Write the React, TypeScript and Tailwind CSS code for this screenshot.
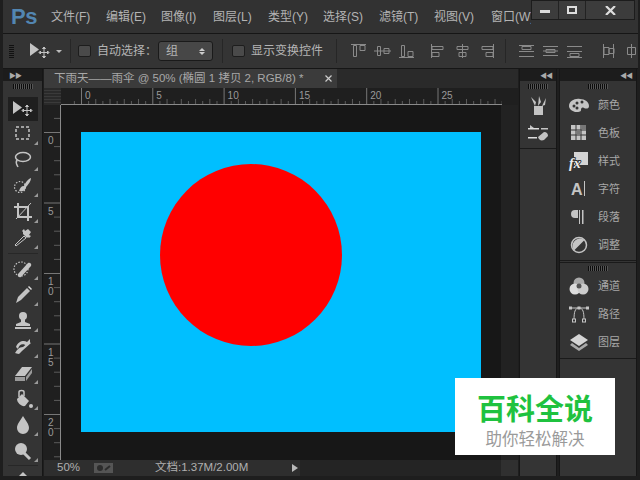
import React from 'react';

const c = '#c4c4c4';

const Grip = () => (
  <div className="h-[5px] w-[20px] bg-[repeating-linear-gradient(90deg,#0c0c0c_0,#0c0c0c_1px,#555_1px,#555_2px)]" />
);

const MoveIcon = () => (
  <svg width="24" height="18" viewBox="0 0 24 18">
    <path d="M2 1v13l9-6.5z" fill={c} />
    <path d="M16 6v9M12 10.5h8M16 5l-1.5 1.5h3zM16 16l-1.5-1.5h3zM11 10.5l1.5-1.5v3zM21 10.5L19.5 9v3z" stroke={c} fill={c} strokeWidth="1" />
  </svg>
);

const tools: React.ReactNode[] = [
  <rect key="m" x="3" y="3" width="13" height="12" fill="none" stroke={c} strokeWidth="1.5" strokeDasharray="3 2" />,
  <g key="l" fill="none" stroke={c} strokeWidth="1.5"><ellipse cx="10" cy="7" rx="7.5" ry="4.5" /><path d="M4 10c-2 3 0 5 1 7" /></g>,
  <g key="q"><circle cx="7" cy="11" r="5.5" fill="none" stroke={c} strokeWidth="1.2" strokeDasharray="1.5 1.5" /><path d="M18 2c-3 1-6 5-7 8-3 0-4 2-5 5 4 1 7-1 7-4 2-2 5-6 5-9z" fill={c} /></g>,
  <g key="c" fill="none" stroke={c} strokeWidth="2"><path d="M5 1v14h14M1 5h14v14" /><path d="M18 1L3 17" strokeWidth="1" /></g>,
  <g key="e"><path d="M3 18l-1-1L11 8l2 2z" fill="none" stroke={c} /><path d="M10 6l4 4 1-1 1 1 2-2-2-1 2-3-3-3-3 2-1-2-2 2 1 1z" fill={c} /></g>,
  <g key="h"><circle cx="8" cy="10" r="7" fill="none" stroke={c} strokeWidth="1.2" strokeDasharray="1.5 1.5" /><path d="M5 15L15 4c2-1 4 1 3 3L8 18c-2 1-4-1-3-3z" fill={c} /></g>,
  <g key="b"><path d="M3 18l2-6L14 3l3 3-9 9z" fill={c} /><path d="M15 2l1-1 3 3-1 1z" fill="#e0e0e0" /></g>,
  <g key="s" fill={c}><circle cx="10" cy="5" r="4" /><path d="M8 8h4v3l5 2v2H3v-2l5-2zM2 16h16v2H2z" /></g>,
  <g key="hb" fill={c}><path d="M3 10c2-6 8-7 11-5l3-3v4l-3 3C10 6 6 7 5 12z" /><path d="M18 6l-9 8-3 3c-2 0-3-1-4-1 2-3 4-6 8-6l6-5z" /></g>,
  <g key="er" fill={c}><path d="M2 13l7-9h10l-7 9z" /><path d="M2 14h10v4H2zM13 14l6-8v4l-6 8z" fill="#9a9a9a" /></g>,
  <g key="f" fill={c}><path d="M4 10l5-5 7 7-4 5c-3 1-8-3-8-7z" /><path d="M6 8V3c0-2 5-2 5 0v4" fill="none" stroke={c} strokeWidth="1.5" /><circle cx="18" cy="17" r="2" /></g>,
  <path key="d" d="M10 1c3 5 6 8 6 12a6 6 0 0 1-12 0c0-4 3-7 6-12z" fill={c} />,
  <g key="z"><circle cx="8" cy="8" r="6" fill={c} /><path d="M11 12l6 6" stroke={c} strokeWidth="3" /></g>,
];

const ToolButton = ({ children }: { children: React.ReactNode }) => (
  <div className="relative flex h-[26px] w-[30px] items-center justify-center">
    <svg width="20" height="20" viewBox="0 0 20 20">{children}</svg>
    <span className="absolute bottom-[2px] right-0 h-0 w-0 border-b-[4px] border-l-[4px] border-b-[#999] border-l-transparent" />
  </div>
);

const AlignIcon = ({ d }: { d: string }) => (
  <svg className="shrink-0" width="17" height="16" viewBox="0 0 17 16">
    <path d={d} fill="none" stroke="#8a8a8a" strokeWidth="1" />
  </svg>
);

const alignIcons = [
  'M1 1.5h15M3.5 2.5h3v11h-3zM10 2.5h5v5h-5z',
  'M0 8h17M3.5 3.5h3v9h-3zM10 5.5h5v5h-5z',
  'M1 14.5h15M3.5 2.5h3v11h-3zM10 8.5h5v5h-5z',
];
const alignIcons2 = [
  'M1.5 1v14M2 3.5h11v3H2zM2 9.5h7v4H2z',
  'M8.5 1v14M3 3.5h11v3H3zM5 9.5h7v4H5z',
  'M15.5 1v14M4 3.5h11v3H4zM8 9.5h7v4H8z',
];
const distIcons = [
  'M1 2.5h15M1 13.5h15M4 3.5h9v3H4zM1 8.5h15',
  'M1 3.5h15M1 12.5h15M4 6.5h9v3H4zM1 8h15',
  'M1 3.5h15M1 14.5h15M4 10.5h9v3H4zM1 8.5h15',
];
const spreadIcons = [
  'M3.5 1v14M13.5 1v14M4 4.5h5v7H4zM9 5.5h5v5H9z',
  'M8.5 1v14M4.5 4.5h8v7h-8z',
];

const menus = [
  { label: '文件(F)', w: 'w-[55px]' },
  { label: '编辑(E)', w: 'w-[55px]' },
  { label: '图像(I)', w: 'w-[52px]' },
  { label: '图层(L)', w: 'w-[55px]' },
  { label: '类型(Y)', w: 'w-[55px]' },
  { label: '选择(S)', w: 'w-[56px]' },
  { label: '滤镜(T)', w: 'w-[55px]' },
  { label: '视图(V)', w: 'w-[57px]' },
  { label: '窗口(W)', w: 'w-[55px]' },
];

const PanelItem = ({ icon, label }: { icon: React.ReactNode; label: string }) => (
  <div className="flex h-[28px] items-center">
    <div className="flex w-[38px] justify-center">{icon}</div>
    <span className="text-[11px] text-[#a8a8a8]">{label}</span>
  </div>
);

const DockHeader = () => (
  <div className="flex h-[12px] items-center justify-end bg-[#1c1c1c] pr-[4px]">
    <span className="text-[7px] leading-none tracking-[-1px] text-[#aaa]">◀◀</span>
  </div>
);

const Ico = ({ children }: { children: React.ReactNode }) => (
  <svg width="22" height="20" viewBox="0 0 22 20">{children}</svg>
);

const TopRuler = () => {
  const ticks: React.ReactNode[] = [];
  for (let i = -1; i <= 59; i++) {
    const x = 20.5 + i * 7.13;
    const major = i % 10 === 0;
    ticks.push(<line key={i} x1={x} x2={x} y1={major ? 0 : i % 2 === 0 ? 11 : 13} y2={16} stroke={major ? '#777' : '#5c5c5c'} />);
  }
  return (
    <svg width="441" height="17" className="block">
      {ticks}
      <line x1="0" x2="441" y1="16.5" y2="16.5" stroke="#8a8a8a" />
      {[0, 5, 10, 15, 20, 25].map((n, i) => (
        <text key={n} x={24 + i * 71.3} y="11" fontSize="10" fill="#9a9a9a" fontFamily="Liberation Sans, sans-serif">{n}</text>
      ))}
    </svg>
  );
};

const LeftRuler = () => {
  const ticks: React.ReactNode[] = [];
  for (let i = -2; i <= 24; i++) {
    const y = 27.5 + i * 14.1;
    const major = i % 5 === 0;
    ticks.push(<line key={i} x1={major ? 0 : 10} x2={16} y1={y} y2={y} stroke={major ? '#777' : '#5c5c5c'} />);
  }
  const labels = [['0'], ['5'], ['1', '0'], ['1', '5'], ['2', '0']];
  return (
    <svg width="17" height="355" className="block shrink-0">
      {ticks}
      <line x1="16.5" x2="16.5" y1="0" y2="355" stroke="#8a8a8a" />
      {labels.map((l, i) =>
        l.map((t, j) => (
          <text key={i + '-' + j} x="4" y={39 + i * 70.6 + j * 10} fontSize="10" fill="#9a9a9a" fontFamily="Liberation Sans, sans-serif">{t}</text>
        ))
      )}
    </svg>
  );
};

export default function App() {
  return (
    <div className="relative flex h-[480px] w-[640px] flex-col overflow-hidden bg-[#1e1e1e] pl-[3px] pr-[2px] pb-[4px] font-['Liberation_Sans','Noto_Sans_CJK_SC',sans-serif] text-[#b4b4b4]">
      {/* menu bar */}
      <div className="flex h-[34px] shrink-0 border-b border-[#161616] bg-[#323232]">
        <div className="flex min-w-0 flex-1 items-center overflow-hidden pl-[8px]">
          <span className="w-[40px] shrink-0 text-[22px] font-bold leading-none tracking-[-0.5px] text-[#5286b2]">Ps</span>
          <div className="flex shrink-0 whitespace-nowrap pt-[1px] text-[12px]">
            {menus.map((m) => (
              <span key={m.label} className={m.w}>{m.label}</span>
            ))}
          </div>
        </div>
        <div className="mr-[3px] flex h-[20px] w-[104px] shrink-0 border border-[#1c1c1c] bg-[#3c3c3c]">
          <div className="flex w-[27px] items-center justify-center border-r border-[#222]">
            <span className="mt-[3px] h-[3px] w-[10px] bg-[#ddd]" />
          </div>
          <div className="flex w-[27px] items-center justify-center border-r border-[#222]">
            <span className="h-[8px] w-[10px] border-2 border-[#ddd]" />
          </div>
          <div className="flex flex-1 items-center justify-center">
            <svg width="11" height="9" viewBox="0 0 11 9"><path d="M1 0l9 9M10 0L1 9" stroke="#ddd" strokeWidth="2.2" /></svg>
          </div>
        </div>
      </div>

      {/* options bar */}
      <div className="flex h-[35px] shrink-0 items-center overflow-hidden whitespace-nowrap border-b border-[#161616] bg-[#343434] pl-[6px] text-[12px] [&>*]:shrink-0">
        <div className="flex w-[6px] flex-col gap-[1px]">
          {Array.from({ length: 7 }).map((_, i) => <span key={i} className="h-[1px] w-[5px] bg-[#111]" />)}
        </div>
        <div className="ml-[13px]"><MoveIcon /></div>
        <span className="ml-[4px] h-0 w-0 border-x-[3px] border-t-[3px] border-x-transparent border-t-[#bbb]" />
        <span className="ml-[8px] h-[24px] w-px bg-[#262626]" />
        <span className="ml-[7px] h-[12px] w-[13px] rounded-[2px] border border-[#1d1d1d] bg-[#4a4a4a]" />
        <span className="ml-[6px]">自动选择：</span>
        <div className="ml-[1px] flex h-[20px] w-[55px] items-center justify-between rounded-[3px] border border-[#1a1a1a] bg-[#474747] px-[7px]">
          <span>组</span>
          <span className="flex flex-col gap-[1px]">
            <span className="h-0 w-0 border-x-[3px] border-b-[3px] border-x-transparent border-b-[#ccc]" />
            <span className="h-0 w-0 border-x-[3px] border-t-[3px] border-x-transparent border-t-[#ccc]" />
          </span>
        </div>
        <span className="ml-[9px] h-[24px] w-px bg-[#262626]" />
        <span className="ml-[9px] h-[12px] w-[13px] rounded-[2px] border border-[#1d1d1d] bg-[#4a4a4a]" />
        <span className="ml-[6px]">显示变换控件</span>
        <span className="ml-[13px] h-[24px] w-px bg-[#262626]" />
        <div className="ml-[13px] flex gap-[7px]">{alignIcons.map((d) => <AlignIcon key={d} d={d} />)}</div>
        <div className="ml-[15px] flex gap-[7px]">{alignIcons2.map((d) => <AlignIcon key={d} d={d} />)}</div>
        <span className="ml-[10px] h-[24px] w-px bg-[#262626]" />
        <div className="ml-[12px] flex gap-[7px]">{distIcons.map((d) => <AlignIcon key={d} d={d} />)}</div>
        <div className="ml-[17px] flex gap-[6px]">{spreadIcons.map((d) => <AlignIcon key={d} d={d} />)}</div>
      </div>

      {/* main */}
      <div className="flex min-h-0 flex-1">
        {/* tools */}
        <div className="flex w-[40px] shrink-0 flex-col overflow-hidden border-r border-[#161616] bg-[#343434]">
          <div className="flex h-[12px] shrink-0 items-center bg-[#1c1c1c] pl-[6px]">
            <span className="text-[7px] leading-none tracking-[-1px] text-[#aaa]">▶▶</span>
          </div>
          <div className="flex flex-col items-center pt-[3px]">
            <Grip />
            <div className="mt-[8px] flex h-[24px] w-[30px] items-center justify-center bg-[#1f1f1f]"><MoveIcon /></div>
            <div className="flex flex-col">
              {tools.slice(0, 5).map((t, i) => <ToolButton key={i}>{t}</ToolButton>)}
            </div>
            <span className="mt-[2px] h-px w-[30px] bg-[#272727]" />
            <div className="mt-[2px] flex flex-col">
              {tools.slice(5).map((t, i) => <ToolButton key={i}>{t}</ToolButton>)}
            </div>
            <span className="mt-[1px] h-px w-[30px] bg-[#272727]" />
            <svg className="mt-[6px] shrink-0" width="16" height="8" viewBox="0 0 16 8"><path d="M0 8l8-8 8 8h-4L8 4 4 8z" fill={c} /></svg>
          </div>
        </div>

        {/* document */}
        <div className="ml-[1px] flex w-[474px] shrink-0 flex-col bg-[#222222]">
          <div className="flex h-[19px] shrink-0 bg-[#2a2a2a]">
            <div className="flex w-[293px] items-center justify-between bg-[#3b3b3b] pl-[10px] pr-[5px] text-[11.5px] text-[#a8a8a8]">
              <span className="whitespace-nowrap">下雨天——雨伞 @ 50% (椭圆 1 拷贝 2, RGB/8) *</span>
              <svg width="7" height="7" viewBox="0 0 7 7"><path d="M0.5 0.5l6 6M6.5 0.5l-6 6" stroke="#ccc" strokeWidth="1.2" /></svg>
            </div>
          </div>
          <div className="flex h-[17px] shrink-0 bg-[#1f1f1f]">
            <div className="w-[17px] bg-[repeating-linear-gradient(0deg,#2a2a2a_0,#2a2a2a_2px,#3a3a3a_2px,#3a3a3a_3px)]" />
            <TopRuler />
          </div>
          <div className="flex min-h-0 flex-1">
            <div className="flex h-[355px] bg-[#1f1f1f]"><LeftRuler /></div>
            <div className="h-[355px] w-[440px] shrink-0 bg-[#171717] pl-[20px] pt-[27px]">
              <div className="h-[300px] w-[400px] overflow-hidden bg-[#00bfff] pl-[79px] pt-[32px]">
                <div className="h-[182px] w-[182px] rounded-full bg-[#ff0000]" />
              </div>
            </div>
          </div>
          <div className="flex h-[16px] shrink-0 bg-[#242424] text-[11.5px] text-[#b0b0b0]">
            <div className="flex w-[256px] items-center bg-[#2e2e2e] pl-[13px]">
              <span className="w-[37px]">50%</span>
              <span className="flex h-[10px] w-[19px] items-center justify-center bg-[#555]">
                <svg width="15" height="8" viewBox="0 0 15 8"><circle cx="4" cy="4" r="3" fill="#2c2c2c" /><path d="M9 6l5-4" stroke="#2c2c2c" strokeWidth="2" /></svg>
              </span>
              <span className="ml-[42px] whitespace-nowrap">文档:1.37M/2.00M</span>
              <span className="ml-auto mr-[2px] h-0 w-0 border-y-[4px] border-l-[6px] border-y-transparent border-l-[#bbb]" />
            </div>
            <div className="ml-auto w-[17px] bg-[#303030]" />
          </div>
        </div>

        {/* narrow dock */}
        <div className="ml-[1px] flex w-[38px] shrink-0 flex-col border-x border-[#161616] bg-[#343434]">
          <DockHeader />
          <div className="flex h-[68px] flex-col items-center border-b border-[#1a1a1a] pt-[3px]">
            <Grip />
            <svg className="mt-[6px]" width="20" height="20" viewBox="0 0 20 20">
              <path d="M6 11h9v9H6z" fill={c} /><path d="M7 11L3 2l5 5zM10 11l1-10 2 6zM14 11l4-8-1 7z" fill={c} />
            </svg>
            <svg className="mt-[9px]" width="22" height="18" viewBox="0 0 22 18">
              <path d="M1 4h11v1.5H1zM1 13h9v1.5H1z" fill="#ddd" /><path d="M3 1l4 3H3zM11 13l6-5c3 0 4 2 4 4l-4 4c-3 1-5 0-6-3z" fill={c} /><path d="M14 4h7v1.5h-7z" fill={c} />
            </svg>
          </div>
        </div>

        {/* wide dock */}
        <div className="ml-[2px] flex w-[78px] shrink-0 flex-col border-r border-[#161616] border-l bg-[#343434]">
          <DockHeader />
          <div className="flex flex-col border-b border-[#1a1a1a] pb-[1px]">
            <div className="flex justify-center pt-[3px] pb-[2px]"><Grip /></div>
            <PanelItem label="颜色" icon={<Ico><path d="M1 11c0-5 6-8 11-7 5 0 9 3 9 7 0 3-3 3-5 2-2-1-3 0-3 2s-3 2-6 2c-3-1-6-3-6-6z" fill={c} /><circle cx="6" cy="11" r="1.5" fill="#343434" /><circle cx="9" cy="8" r="1.5" fill="#343434" /><circle cx="14" cy="7" r="1.5" fill="#343434" /><circle cx="9" cy="13" r="1.5" fill="#343434" /></Ico>} />
            <PanelItem label="色板" icon={<Ico><rect x="3" y="2" width="15" height="15" fill={c} /><path d="M3 7h15M3 12h15M8 2v15M13 2v15" stroke="#343434" /><rect x="13.5" y="2" width="4.5" height="4.5" fill="#777" /><rect x="8.5" y="7.5" width="4" height="4" fill="#777" /></Ico>} />
            <PanelItem label="样式" icon={<Ico><rect x="6" y="1" width="14" height="13" fill="#d4d4d4" /><text x="1" y="17" fontSize="14" fontStyle="italic" fontWeight="bold" fontFamily="Liberation Serif, serif" fill="#ececec" stroke="#343434" strokeWidth="2" paintOrder="stroke">fx</text></Ico>} />
            <PanelItem label="字符" icon={<Ico><text x="3" y="16" fontSize="16" fontWeight="bold" fontFamily="Liberation Sans, sans-serif" fill={c}>A</text><path d="M16.5 2v15" stroke={c} /></Ico>} />
            <PanelItem label="段落" icon={<Ico><path d="M10 3H7a4 4 0 0 0 0 8h3zM11 3h1v14h-1zM14 3h1.5v14H14z" fill={c} /></Ico>} />
            <PanelItem label="调整" icon={<Ico><circle cx="11" cy="10" r="7.5" fill="#343434" stroke={c} strokeWidth="1.5" /><path d="M6 15.5A7.5 7.5 0 0 1 16.5 5z" fill={c} /></Ico>} />
          </div>
          <div className="mt-[1px] flex h-[97px] flex-col border-t border-b border-[#1a1a1a]">
            <div className="flex justify-center pt-[3px] pb-[1px]"><Grip /></div>
            <PanelItem label="通道" icon={<Ico><circle cx="11" cy="7" r="5.5" fill="#aaa" /><circle cx="7" cy="13" r="5.5" fill="#ddd" /><circle cx="15" cy="13" r="5.5" fill="#ccc" /><circle cx="11" cy="10" r="2.5" fill="#555" /></Ico>} />
            <PanelItem label="路径" icon={<Ico><path d="M6 16C6 8 7 4 11 4s5 4 5 12" fill="none" stroke={c} /><path d="M2 4h18" stroke={c} /><rect x="1" y="2.5" width="3" height="3" fill={c} /><rect x="9.5" y="2.5" width="3" height="3" fill={c} /><rect x="18" y="2.5" width="3" height="3" fill={c} /><rect x="4.5" y="15" width="3" height="3" fill="#343434" stroke={c} /><rect x="14.5" y="15" width="3" height="3" fill="#343434" stroke={c} /></Ico>} />
            <PanelItem label="图层" icon={<Ico><path d="M11 2l9 6-9 6-9-6z" fill="#d4d4d4" /><path d="M4 11l7 5 7-5 2 2-9 6-9-6z" fill="#a8a8a8" /></Ico>} />
          </div>
        </div>
      </div>

      {/* watermark */}
      <div className="absolute left-[455px] top-[378px] flex h-[77px] w-[160px] flex-col items-center bg-white pt-[13px]">
        <span className="text-[29px] font-bold leading-[38px] text-[#1fc23f]">百科全说</span>
        <span className="text-[16.5px] leading-[20px] text-[#9a9a9a]">助你轻松解决</span>
      </div>
    </div>
  );
}
